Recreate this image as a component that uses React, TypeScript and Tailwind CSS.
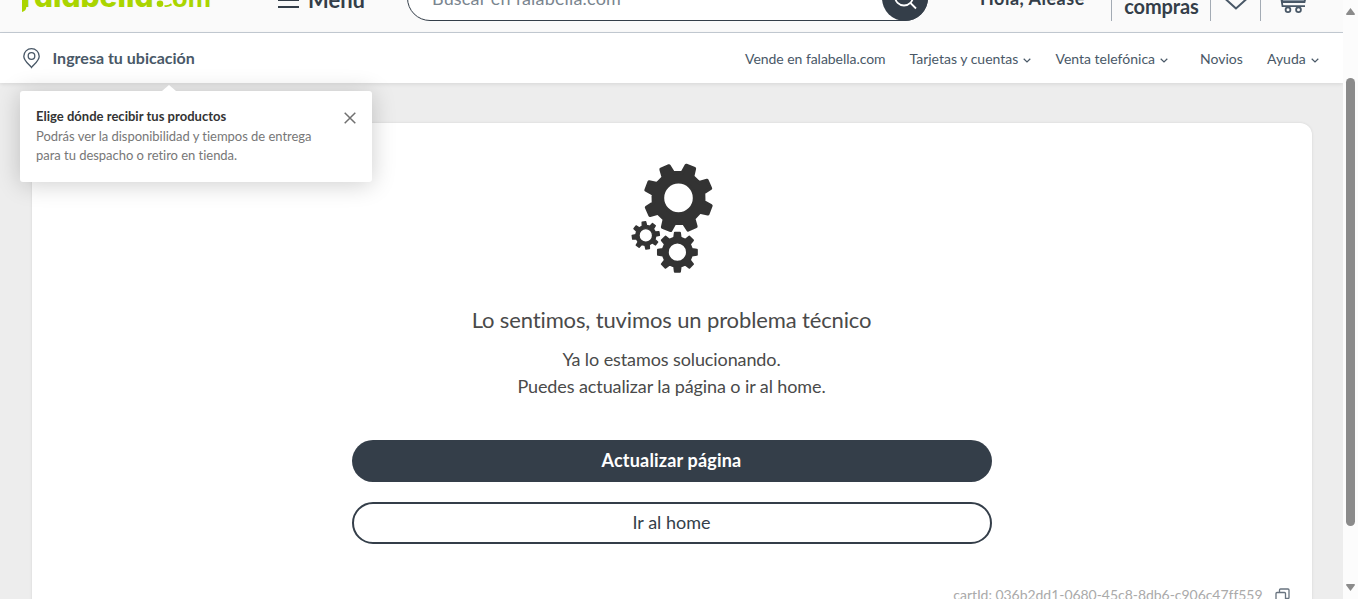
import type { ReactNode } from "react";

function gearPath(cx: number, cy: number, outer: number, root: number, hole: number, rotation: number) {
  const teeth = 8;
  const pts: string[] = [];
  const at = (r: number, deg: number) => {
    const a = (deg * Math.PI) / 180;
    return `${(cx + r * Math.cos(a)).toFixed(2)},${(cy + r * Math.sin(a)).toFixed(2)}`;
  };
  for (let i = 0; i < teeth; i++) {
    const a = rotation + (360 / teeth) * i;
    pts.push(at(root, a - 12.5), at(outer, a - 7.5), at(outer, a + 7.5), at(root, a + 12.5));
  }
  return `M${pts.join("L")}ZM${cx - hole},${cy}a${hole},${hole} 0 1 0 ${2 * hole},0a${hole},${hole} 0 1 0 ${-2 * hole},0Z`;
}

function Gears() {
  return (
    <svg className="block h-[112px] w-[84px]" viewBox="630 162 84 112" fill="#333" stroke="#333" strokeLinejoin="round" fillRule="evenodd">
      <path strokeWidth="3.4" d={gearPath(678.5, 197.9, 33.4, 25.6, 16, 21)} />
      <path strokeWidth="2" d={gearPath(677.4, 252.2, 19.6, 14.8, 9.6, 0)} />
      <path strokeWidth="1.4" d={gearPath(645.8, 235.4, 13.6, 10, 6.8, -8)} />
    </svg>
  );
}

function Chevron() {
  return (
    <svg className="mt-0.5 ml-[5px] h-[5px] w-2" viewBox="0 0 8 5" fill="none" stroke="#495867" strokeWidth="1.2">
      <path d="M0.7 0.8 4 4 7.3 0.8" />
    </svg>
  );
}

function NavItem({ children, menu, className }: { children: ReactNode; menu?: boolean; className: string }) {
  return (
    <a className={`flex shrink-0 items-center text-sm whitespace-nowrap ${className}`}>
      {children}
      {menu && <Chevron />}
    </a>
  );
}

function Header() {
  return (
    <header className="h-[33px] overflow-hidden border-b border-[#c5ccd4] bg-[#fafafa] text-[#343e49]">
      <div className="-mt-9 flex h-[68px] items-center">
        <svg className="ml-5 h-12 w-[194px] shrink-0 [font-feature-settings:'cv11']" viewBox="20 -26 194 48" fill="#aad500">
          <text x="20.500" y="7" fontFamily="Inter" fontWeight="800" fontSize="29">f</text>
          <path d="M22 12V0H26.300V7Q26.300 11 22 12Z" />
          <text x="34" y="7" fontFamily="Inter" fontWeight="800" fontSize="29" textLength="119.500" lengthAdjust="spacingAndGlyphs">alabella</text>
          <circle cx="160" cy="3.800" r="3.300" />
          <path d="M164.500 5Q168 6 171 3.300L172 5.300Q168 7.500 164.500 6.800Z" />
          <text x="172" y="7" fontFamily="Inter" fontWeight="700" fontSize="24" textLength="39" lengthAdjust="spacingAndGlyphs">om</text>
        </svg>
        <div className="ml-16 flex h-6 w-[87px] shrink-0 items-center">
          <div className="mt-1 flex h-[16px] w-[21px] shrink-0 flex-col justify-between">
            <span className="h-0.5 bg-[#343e49]" />
            <span className="h-0.5 bg-[#343e49]" />
            <span className="h-0.5 bg-[#343e49]" />
          </div>
          <span className="mt-0.5 ml-[9px] text-[22px] font-bold whitespace-nowrap">Menú</span>
        </div>
        <div className="ml-[42px] flex h-[46px] w-[521px] shrink-0 items-center justify-between rounded-full border border-[#343e49] bg-white pl-6">
          <span className="text-lg tracking-[0.18px] text-[#7a858f]">Buscar en falabella.com</span>
          <span className="-mr-px flex size-[46px] items-center justify-center rounded-full bg-[#343e49]">
            <svg className="size-6" viewBox="0 0 24 24" fill="none" stroke="white" strokeWidth="1.8">
              <circle cx="11" cy="10.500" r="9" />
              <path d="m17.500 17 5.500 5.500" />
            </svg>
          </span>
        </div>
        <span className="ml-[52px] w-[107px] shrink-0 text-lg font-bold tracking-[0.5px] whitespace-nowrap">Hola, Alease</span>
        <div className="ml-6 flex h-[46px] w-[100px] shrink-0 flex-col items-center justify-center border-x border-[#a3abb4] text-xl leading-6 font-bold">
          <span className="shrink-0">Mis</span>
          <span className="mb-2 shrink-0 pl-px tracking-[-0.1px]">compras</span>
        </div>
        <div className="flex h-[46px] w-[50px] shrink-0 items-center justify-center border-r border-[#a3abb4]">
          <svg className="mt-0.5 h-[22px] w-6" viewBox="0 0 24 22" fill="none" stroke="#495867" strokeWidth="2">
            <path d="M12 20.500 1.500 11Q-1.500 7 1.500 3.500Q7.500-1 12 5Q16.500-1 22.500 3.500Q25.500 7 22.500 11Z" />
          </svg>
        </div>
        <svg className="mt-1 ml-3.5 h-[30px] w-[34px] shrink-0" viewBox="1276 -15 34 30" fill="none" stroke="#495867" strokeWidth="1.8">
          <path d="M1277-10h4l2.500 16.200H1306" />
          <path d="M1282-4H1307L1305.500 2H1283.500Z" fill="#8b98a4" />
          <circle cx="1289" cy="9.700" r="2.400" />
          <circle cx="1299.500" cy="9.700" r="2.400" />
        </svg>
      </div>
    </header>
  );
}

function SubHeader() {
  return (
    <nav className="relative flex h-[50px] shrink-0 items-center bg-white text-[#495867] shadow-[0_1px_4px_rgba(0,0,0,0.1)]">
      <svg className="ml-[23px] h-[21px] w-[17px] shrink-0" viewBox="0 0 17 21" fill="none" stroke="#495867" strokeWidth="1.3">
        <path d="M8.500 19.500C6.500 16.500.8 13 .8 8.200A7.700 7.500 0 0 1 16.200 8.200C16.200 13 10.500 16.500 8.500 19.500Z" />
        <circle cx="8.500" cy="8" r="3.300" />
      </svg>
      <span className="ml-3 w-[693px] shrink-0 pl-[0.5px] text-base font-bold">Ingresa tu ubicación</span>
      <NavItem className="w-[164px] pt-0.5 tracking-[-0.04px]">Vende en falabella.com</NavItem>
      <NavItem className="w-[146px] pt-0.5 pl-[0.5px]" menu>Tarjetas y cuentas</NavItem>
      <NavItem className="w-[145px] pt-0.5 pl-[0.5px]" menu>Venta telefónica</NavItem>
      <NavItem className="w-[67px] pt-0.5">Novios</NavItem>
      <NavItem className="pt-0.5" menu>Ayuda</NavItem>
    </nav>
  );
}

function LocationTooltip() {
  return (
    <aside className="absolute top-[91px] left-5 h-[91px] w-[352px] rounded-[3px] bg-white px-4 pt-4 text-[13px] shadow-[0_2px_24px_rgba(0,0,0,0.2)]">
      <svg className="absolute -top-1.5 left-[142px] h-1.5 w-3.5" viewBox="0 0 14 6" fill="white">
        <path d="M0 6 7 0l7 6Z" />
      </svg>
      <div className="flex justify-between">
        <strong className="leading-[19px] font-bold tracking-[0.02px] text-[#333]">Elige dónde recibir tus productos</strong>
        <svg className="mt-[5px] size-3 text-[#707070]" viewBox="0 0 12 12" stroke="currentColor" strokeWidth="1.5">
          <path d="m.7.7 10.600 10.600M11.300.7.700 11.300" />
        </svg>
      </div>
      <p className="mt-px leading-[19px] tracking-[-0.03px] whitespace-nowrap text-[#777]">
        Podrás ver la disponibilidad y tiempos de entrega
        <br />
        para tu despacho o retiro en tienda.
      </p>
    </aside>
  );
}

function ErrorCard() {
  return (
    <section className="mx-auto mt-10 flex h-[520px] w-[1280px] flex-col items-center rounded-xl bg-white pt-[39px] text-[#4a4a4a] shadow-[0_0_3px_rgba(0,0,0,0.1)]">
      <Gears />
      <h1 className="mt-[30px] text-[22px] leading-8 tracking-[-0.13px] whitespace-nowrap">Lo sentimos, tuvimos un problema técnico</h1>
      <p className="mt-[10px] text-center text-lg leading-[27px] tracking-[-0.1px] whitespace-nowrap">
        Ya lo estamos solucionando.
        <br />
        Puedes actualizar la página o ir al home.
      </p>
      <button className="mt-10 h-[42px] w-[640px] shrink-0 rounded-full bg-[#343e49] pb-0.5 text-lg font-bold tracking-[0.18px] text-white">Actualizar página</button>
      <button className="mt-5 h-[42px] w-[640px] shrink-0 rounded-full border-2 border-[#343e49] pb-0.5 text-lg text-[#343e49]">Ir al home</button>
      <div className="mt-[41px] mr-[22px] flex items-center self-end text-sm text-[#aaa]">
        <span className="tracking-[-0.04px] whitespace-nowrap">cartId: 036b2dd1-0680-45c8-8db6-c906c47ff559</span>
        <svg className="ml-3 size-[15px]" viewBox="0 0 15 15" fill="none" stroke="#68737f" strokeWidth="1.3">
          <rect x="1" y="4.500" width="9.500" height="9.500" rx="1" />
          <path d="M4.500 4V2Q4.500 1 5.500 1H13Q14 1 14 2V9.500Q14 10.500 13 10.500H11" />
        </svg>
      </div>
    </section>
  );
}

function Scrollbar() {
  return (
    <div className="flex h-full w-[15px] shrink-0 flex-col items-center bg-[#fcfcfc]">
      <svg className="mt-2 h-[7px] w-[9px]" viewBox="0 0 9 7" fill="#8b8b8b">
        <path d="M4.500 0 9 6Q9 7 8 7H1Q0 7 0 6Z" />
      </svg>
      <div className="mt-[63px] h-[448px] w-[9px] rounded-full bg-[#8b8b8b]" />
      <svg className="mt-[58px] h-[7px] w-[9px]" viewBox="0 0 9 7" fill="#8b8b8b">
        <path d="M4.500 7 0 1Q0 0 1 0H8Q9 0 9 1Z" />
      </svg>
    </div>
  );
}

export default function App() {
  return (
    <div className="flex h-[599px] w-[1358px] overflow-hidden bg-[#ededed] font-[Lato,sans-serif] [font-variant-ligatures:none]">
      <main className="relative h-full w-[1343px] shrink-0 overflow-hidden">
        <Header />
        <SubHeader />
        <ErrorCard />
        <LocationTooltip />
      </main>
      <Scrollbar />
    </div>
  );
}
